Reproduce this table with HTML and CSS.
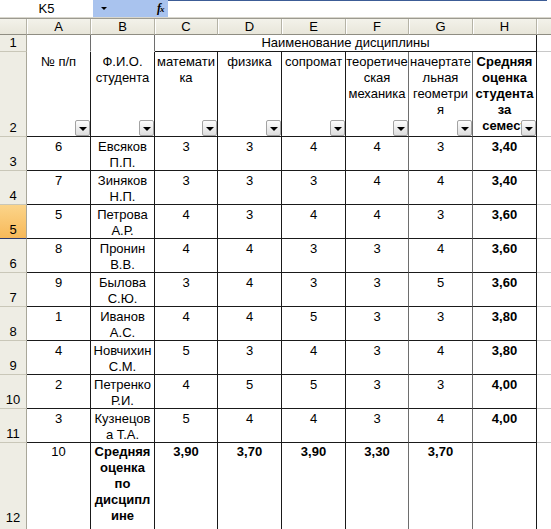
FILE: index.html
```html
<!DOCTYPE html>
<html lang="ru">
<head>
<meta charset="utf-8">
<title>Лист</title>
<link rel="stylesheet" href="styles.css">
</head>
<body>
<div class="app">
  <div class="formula-bar">
    <div class="name-box">K5</div>
    <div class="name-tools"><span class="drop-arrow"></span><span class="fx">f<span class="fx-x">x</span></span></div>
    <div class="formula-input"></div>
    <div class="formula-end"></div>
  </div>
  <div class="bar-gap"></div>
  <div class="sheet">
    <div class="corner"></div>
    <div class="ch">A</div><div class="ch">B</div><div class="ch">C</div><div class="ch">D</div><div class="ch">E</div><div class="ch">F</div><div class="ch">G</div><div class="ch">H</div><div class="ch ch-rest"></div>

    <div class="rh">1</div>
    <div class="c top-empty"></div><div class="c top-empty"></div>
    <div class="c merged">Наименование дисциплины</div>
    <div class="c rest"></div>

    <div class="rh">2</div>
    <div class="c hd">№ п/п<span class="flt"></span></div>
    <div class="c hd">Ф.И.О.<br>студента<span class="flt"></span></div>
    <div class="c hd">математи<br>ка<span class="flt"></span></div>
    <div class="c hd">физика<span class="flt"></span></div>
    <div class="c hd">сопромат<span class="flt"></span></div>
    <div class="c hd">теоретиче<br>ская<br>механика<span class="flt"></span></div>
    <div class="c hd">начертате<br>льная<br>геометри<br>я<span class="flt"></span></div>
    <div class="c hd b">Средняя<br>оценка<br>студента<br>за<br>семест<span class="flt"></span></div>
    <div class="c rest"></div>

    <div class="rh">3</div>
    <div class="c">6</div><div class="c">Евсяков<br>П.П.</div><div class="c">3</div><div class="c">3</div><div class="c">4</div><div class="c">4</div><div class="c">3</div><div class="c b">3,40</div><div class="c rest"></div>

    <div class="rh">4</div>
    <div class="c">7</div><div class="c">Зиняков<br>Н.П.</div><div class="c">3</div><div class="c">3</div><div class="c">3</div><div class="c">4</div><div class="c">4</div><div class="c b">3,40</div><div class="c rest"></div>

    <div class="rh sel">5</div>
    <div class="c">5</div><div class="c">Петрова<br>А.Р.</div><div class="c">4</div><div class="c">3</div><div class="c">4</div><div class="c">4</div><div class="c">3</div><div class="c b">3,60</div><div class="c rest"></div>

    <div class="rh">6</div>
    <div class="c">8</div><div class="c">Пронин<br>В.В.</div><div class="c">4</div><div class="c">4</div><div class="c">3</div><div class="c">3</div><div class="c">4</div><div class="c b">3,60</div><div class="c rest"></div>

    <div class="rh">7</div>
    <div class="c">9</div><div class="c">Былова<br>С.Ю.</div><div class="c">3</div><div class="c">4</div><div class="c">3</div><div class="c">3</div><div class="c">5</div><div class="c b">3,60</div><div class="c rest"></div>

    <div class="rh">8</div>
    <div class="c">1</div><div class="c">Иванов<br>А.С.</div><div class="c">4</div><div class="c">4</div><div class="c">5</div><div class="c">3</div><div class="c">3</div><div class="c b">3,80</div><div class="c rest"></div>

    <div class="rh">9</div>
    <div class="c">4</div><div class="c">Новчихин<br>С.М.</div><div class="c">5</div><div class="c">3</div><div class="c">4</div><div class="c">3</div><div class="c">4</div><div class="c b">3,80</div><div class="c rest"></div>

    <div class="rh">10</div>
    <div class="c">2</div><div class="c">Петренко<br>Р.И.</div><div class="c">4</div><div class="c">5</div><div class="c">5</div><div class="c">3</div><div class="c">3</div><div class="c b">4,00</div><div class="c rest"></div>

    <div class="rh">11</div>
    <div class="c">3</div><div class="c">Кузнецов<br>а Т.А.</div><div class="c">5</div><div class="c">4</div><div class="c">4</div><div class="c">3</div><div class="c">4</div><div class="c b">4,00</div><div class="c rest"></div>

    <div class="rh rh-last">12</div>
    <div class="c last">10</div><div class="c last b">Средняя<br>оценка<br>по<br>дисципл<br>ине</div><div class="c last b">3,90</div><div class="c last b">3,70</div><div class="c last b">3,90</div><div class="c last b">3,30</div><div class="c last b">3,70</div><div class="c last"></div><div class="c rest"></div>
  </div>
</div>
</body>
</html>
```

FILE: styles.css
```css
* { box-sizing: border-box; }
html, body {
  margin: 0;
  padding: 0;
  background: #fff;
  overflow: hidden;
}
body {
  font-family: "Liberation Sans", Arial, sans-serif;
  font-size: 13px;
  color: #000;
}
.app {
  width: 551px;
  height: 529px;
  overflow: hidden;
}
.formula-bar {
  display: flex;
  height: 17px;
}
.name-box {
  width: 93px;
  text-align: center;
  line-height: 17px;
  background: #fff;
}
.name-tools {
  width: 75px;
  background: #a9c3ee;
  display: flex;
  align-items: center;
}
.drop-arrow {
  margin-left: 8px;
  width: 0;
  height: 0;
  border-left: 3px solid transparent;
  border-right: 3px solid transparent;
  border-top: 3px solid #000;
}
.fx {
  margin-left: 50px;
  font-family: "Liberation Serif", "Times New Roman", serif;
  font-style: italic;
  font-weight: bold;
  font-size: 12px;
  letter-spacing: -1px;
}
.fx-x { font-size: 9px; }
.formula-input {
  flex: 1;
  background: #fff;
  border-top: 1px solid #3c5c96;
}
.formula-end {
  width: 4px;
  background: #fff;
}
.bar-gap {
  height: 2px;
  background: #d8d6cc;
  border-bottom: 1px solid #9c9a90;
}
.sheet {
  display: grid;
  grid-template-columns: 27px 64px 64px 63px 64px 64px 63px 64px 64px 1fr;
  grid-template-rows: 16px 17px 85px repeat(9, 34px) 90px;
}
.corner, .ch {
  background: linear-gradient(#f3f2ea, #e8e6da);
  border-right: 1px solid #b5b3a6;
  border-bottom: 1px solid #8f8d82;
}
.ch {
  text-align: center;
  line-height: 16px;
  box-shadow: inset 1px 0 0 #fff;
}
.ch-rest { border-right: none; }
.rh {
  background: #eeede4;
  border-right: 1px solid #a9a799;
  border-bottom: 1px solid #c9c7b8;
  display: flex;
  align-items: flex-end;
  justify-content: center;
  line-height: 15px;
  padding-bottom: 1px;
}
.rh-last { padding-bottom: 7px; }
.rh.sel {
  background: linear-gradient(#fbd489, #f7b95a);
  border-bottom-color: #2c3a6e;
}
.c {
  border-right: 1px solid #1a1a1a;
  border-bottom: 1px solid #1a1a1a;
  text-align: center;
  line-height: 16px;
  padding-top: 2px;
  white-space: nowrap;
  overflow: hidden;
  position: relative;
}
.c:nth-child(10n+2), .c:nth-child(10n+3) {
  border-right-color: #6e6e6e;
}
.top-empty {
  border-bottom-color: #fff;
}
.merged {
  grid-column: span 6;
  line-height: 15px;
  padding-top: 0;
}
.rest {
  border-right: none;
  border-bottom-color: #c8c8c8;
}
.last { padding-top: 1px; }
.hd { padding-top: 2px; }
.b { font-weight: bold; }
.flt {
  position: absolute;
  right: 0;
  bottom: 0;
  width: 15px;
  height: 16px;
  border: 1px solid #a3a3a3;
  border-radius: 2px;
  background: linear-gradient(#fdfdfd, #dedede);
}
.flt::after {
  content: "";
  position: absolute;
  left: 3px;
  top: 6px;
  border-left: 4px solid transparent;
  border-right: 4px solid transparent;
  border-top: 4px solid #000;
}
```
